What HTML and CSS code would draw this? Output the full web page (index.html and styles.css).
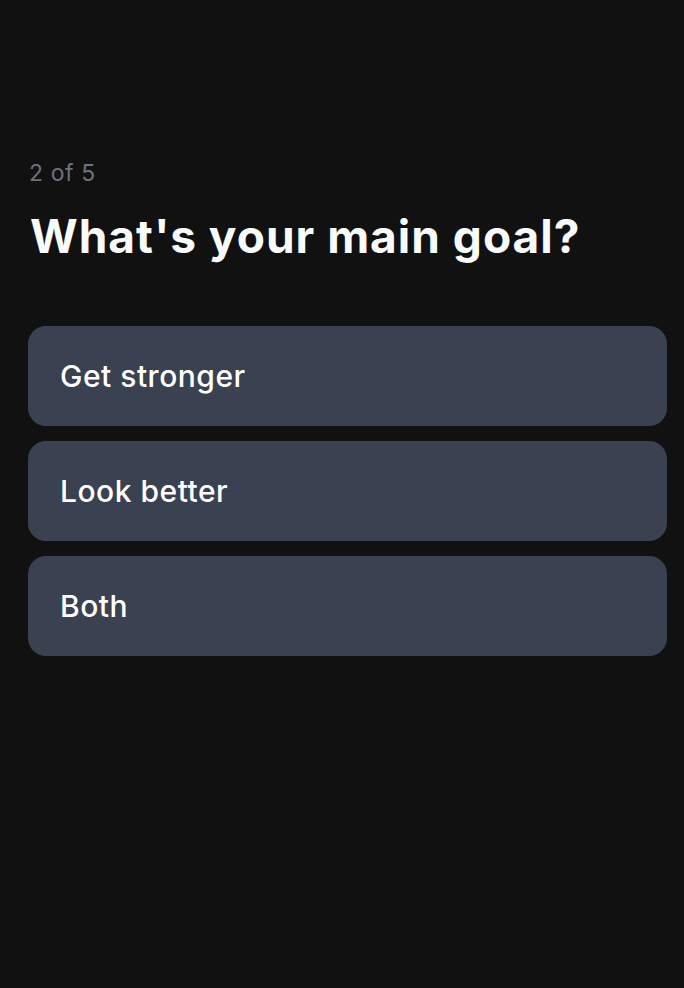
FILE: index.html
```html
<!DOCTYPE html>
<html>
<head>
<meta charset="utf-8">
<link rel="stylesheet" href="styles.css">
</head>
<body>
<main class="screen">
  <div class="step">2 of 5</div>
  <h1 class="title">What's your main goal?</h1>
  <div class="options">
    <button class="option">Get stronger</button>
    <button class="option">Look better</button>
    <button class="option">Both</button>
  </div>
</main>
</body>
</html>
```
FILE: styles.css
```css
html, body {
  margin: 0;
  padding: 0;
  background: #111111;
  height: 100%;
}
body {
  font-family: Inter, "Noto Sans", sans-serif;
}
.screen {
  padding: 158px 17px 0 28px;
}
.step {
  color: #6b7280;
  font-size: 23px;
  line-height: 30px;
  letter-spacing: 0.6px;
  margin-left: 1px;
}
.title {
  margin: 20px 0 0 2px;
  color: #f9fafb;
  font-size: 46px;
  font-weight: 700;
  line-height: 56px;
  letter-spacing: 1px;
}
.options {
  margin-top: 62px;
  display: flex;
  flex-direction: column;
  gap: 15px;
}
.option {
  display: block;
  width: 100%;
  height: 100px;
  border: none;
  border-radius: 18px;
  background: #3a4150;
  color: #ffffff;
  font-family: Inter, "Noto Sans", sans-serif;
  font-size: 30px;
  font-weight: 500;
  letter-spacing: 0.5px;
  text-align: left;
  padding: 0 32px;
}
```
